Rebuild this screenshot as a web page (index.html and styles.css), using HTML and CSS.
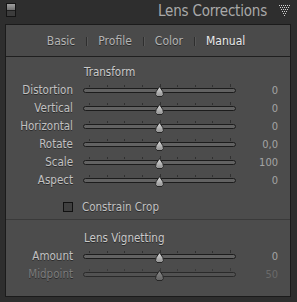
FILE: index.html
```html
<!DOCTYPE html>
<html lang="en">
<head>
    <meta charset="UTF-8">
    <meta name="viewport" content="width=device-width, initial-scale=1.0">
    <title>Lens Corrections</title>
    <link rel="stylesheet" href="styles.css">
</head>
<body>
    <div class="header">
        <div class="solo-switch"><span class="top"></span><span class="bottom"></span></div>
        <h1 class="title">Lens Corrections</h1>
        <svg class="collapse" width="11" height="11" viewBox="0 0 11 11">
            <g fill="#cfcfcf">
                <rect x="0" y="0" width="1" height="1"/><rect x="2" y="0" width="1" height="1"/><rect x="4" y="0" width="1" height="1"/><rect x="6" y="0" width="1" height="1"/><rect x="8" y="0" width="1" height="1"/><rect x="10" y="0" width="1" height="1"/>
                <rect x="1" y="2" width="1" height="1"/><rect x="3" y="2" width="1" height="1"/><rect x="5" y="2" width="1" height="1"/><rect x="7" y="2" width="1" height="1"/><rect x="9" y="2" width="1" height="1"/>
                <rect x="2" y="4" width="1" height="1"/><rect x="4" y="4" width="1" height="1"/><rect x="6" y="4" width="1" height="1"/><rect x="8" y="4" width="1" height="1"/>
                <rect x="3" y="6" width="1" height="1"/><rect x="5" y="6" width="1" height="1"/><rect x="7" y="6" width="1" height="1"/>
                <rect x="4" y="8" width="1" height="1"/><rect x="6" y="8" width="1" height="1"/>
                <rect x="5" y="10" width="1" height="1"/>
            </g>
        </svg>
    </div>

    <div class="panel">
        <div class="tabs">
            <span class="tab">Basic</span>
            <span class="sep"></span>
            <span class="tab">Profile</span>
            <span class="sep"></span>
            <span class="tab">Color</span>
            <span class="sep"></span>
            <span class="tab active">Manual</span>
        </div>

        <div class="content">
            <div class="group">
                <div class="row">
                    <span></span>
                    <span class="heading">Transform</span>
                    <span></span>
                </div>
                <div class="row" data-name="Distortion"></div>
                <div class="row" data-name="Vertical"></div>
                <div class="row" data-name="Horizontal"></div>
                <div class="row" data-name="Rotate"></div>
                <div class="row" data-name="Scale"></div>
                <div class="row" data-name="Aspect"></div>
            </div>

            <div class="row check-row">
                <span class="checkbox"></span>
                <span class="check-label">Constrain Crop</span>
                <span></span>
            </div>

            <div class="divider"></div>

            <div class="group">
                <div class="row">
                    <span></span>
                    <span class="heading">Lens Vignetting</span>
                    <span></span>
                </div>
                <div class="row" data-name="Amount"></div>
                <div class="row disabled" data-name="Midpoint"></div>
            </div>
        </div>
    </div>

    <script>
        var values = {
            Distortion: '0', Vertical: '0', Horizontal: '0', Rotate: '0,0',
            Scale: '100', Aspect: '0', Amount: '0', Midpoint: '50'
        };

        // build each slider row from its name
        document.querySelectorAll('.row[data-name]').forEach(function (row) {
            var name = row.getAttribute('data-name');
            var ticks = '';
            for (var i = 0; i < 9; i++) {
                ticks += '<i class="' + (i === 4 || i === 8 ? 'long' : '') + '"></i>';
            }
            row.innerHTML =
                '<span class="label">' + name + '</span>' +
                '<span class="slider">' +
                    '<span class="ticks">' + ticks + '</span>' +
                    '<span class="track"></span>' +
                    '<svg class="thumb" width="11" height="11" viewBox="0 0 11 11">' +
                        '<defs><linearGradient id="g-' + name + '" x1="0" y1="0" x2="0" y2="1">' +
                        '<stop offset="0" class="stop-a"/><stop offset="1" class="stop-b"/></linearGradient></defs>' +
                        '<path d="M5.5 0.5 L8.8 5.5 Q10.5 9 8 10.5 L3 10.5 Q0.5 9 2.2 5.5 Z" fill="url(#g-' + name + ')" stroke="#262626" stroke-width="1"/>' +
                    '</svg>' +
                '</span>' +
                '<span class="value">' + values[name] + '</span>';
        });
    </script>
</body>
</html>
```
FILE: styles.css
```css
body {
    margin: 0;
    background-color: #2e2e2e;
    font-family: "DejaVu Sans", "Liberation Sans", sans-serif;
    font-stretch: condensed;
    color: #c4c4c4;
}
.header {
    height: 24px;
    display: flex;
    align-items: center;
    padding: 0 7px 0 6px;
}
.solo-switch {
    width: 8px;
    height: 12px;
    border: 1px solid #141414;
    display: flex;
    flex-direction: column;
    margin-top: -4px;
}
.solo-switch .top {
    height: 6px;
    background: linear-gradient(#a0a0a0, #6e6e6e);
    border-bottom: 1px solid #202020;
}
.solo-switch .bottom {
    flex: 1;
    background-color: #3c3c3c;
}
.title {
    margin: 0 12px 0 auto;
    font-size: 15px;
    font-weight: normal;
    color: #a9a9a9;
    letter-spacing: -0.2px;
    margin-top: -3px;
}
.collapse {
    margin-top: -4px;
}

.panel {
    margin-left: 5px;
    width: 284px;
    border: 1px solid #1b1b1b;
    background-color: #4c4c4c;
}
.tabs {
    height: 31px;
    background-color: #4a4a4a;
    border-bottom: 1px solid #1f1f1f;
    display: flex;
    align-items: center;
    justify-content: center;
    gap: 11px;
    padding-right: 4px;
}
.tab {
    font-size: 12px;
    color: #b4b4b4;
    text-shadow: 0 1px 0 #2a2a2a;
}
.tab.active {
    color: #ececec;
}
.sep {
    width: 1px;
    height: 9px;
    background-color: #2e2e2e;
    box-shadow: 1px 0 0 #575757;
    margin-top: 2px;
}

.content {
    padding: 6px 0 13px;
}
.row {
    display: grid;
    grid-template-columns: 67px 153px 32px;
    column-gap: 10px;
    height: 18px;
    align-items: center;
    font-size: 11.5px;
}
.label {
    text-align: right;
    color: #c2c2c2;
    text-shadow: 0 1px 0 #2b2b2b;
}
.heading {
    color: #cacaca;
    text-shadow: 0 1px 0 #2b2b2b;
    padding-left: 1px;
}
.value {
    text-align: right;
    color: #a4a4a4;
    font-size: 11px;
}

.slider {
    position: relative;
    height: 18px;
}
.ticks {
    position: absolute;
    left: 6px;
    width: 142px;
    top: 3px;
    height: 3px;
    display: flex;
    justify-content: space-between;
    align-items: flex-end;
}
.ticks i {
    width: 1px;
    height: 2px;
    background-color: #303030;
}
.ticks i.long {
    height: 3px;
}
.track {
    position: absolute;
    left: 0;
    top: 7px;
    height: 3px;
    width: 151px;
    border: 1px solid #1c1c1c;
    border-radius: 3px;
    background-color: #626262;
}
.thumb {
    position: absolute;
    left: 71px;
    top: 5px;
}
.stop-a { stop-color: #e0e0e0; }
.stop-b { stop-color: #909090; }

.disabled .label { color: #7c7c7c; }
.disabled .value { color: #6a6a6a; }
.disabled .ticks i { background-color: #3a3a3a; }
.disabled .track { background-color: #525252; border-color: #2a2a2a; }
.disabled .stop-a { stop-color: #8c8c8c; }
.disabled .stop-b { stop-color: #626262; }

.check-row {
    margin-top: 9px;
}
.checkbox {
    justify-self: end;
    width: 8px;
    height: 8px;
    border: 1px solid #111;
    background-color: #404040;
}
.check-label {
    color: #c2c2c2;
    text-shadow: 0 1px 0 #2b2b2b;
    margin-left: -1px;
}
.divider {
    height: 1px;
    background-color: #3a3a3a;
    margin: 3px 0 9px;
}
```
